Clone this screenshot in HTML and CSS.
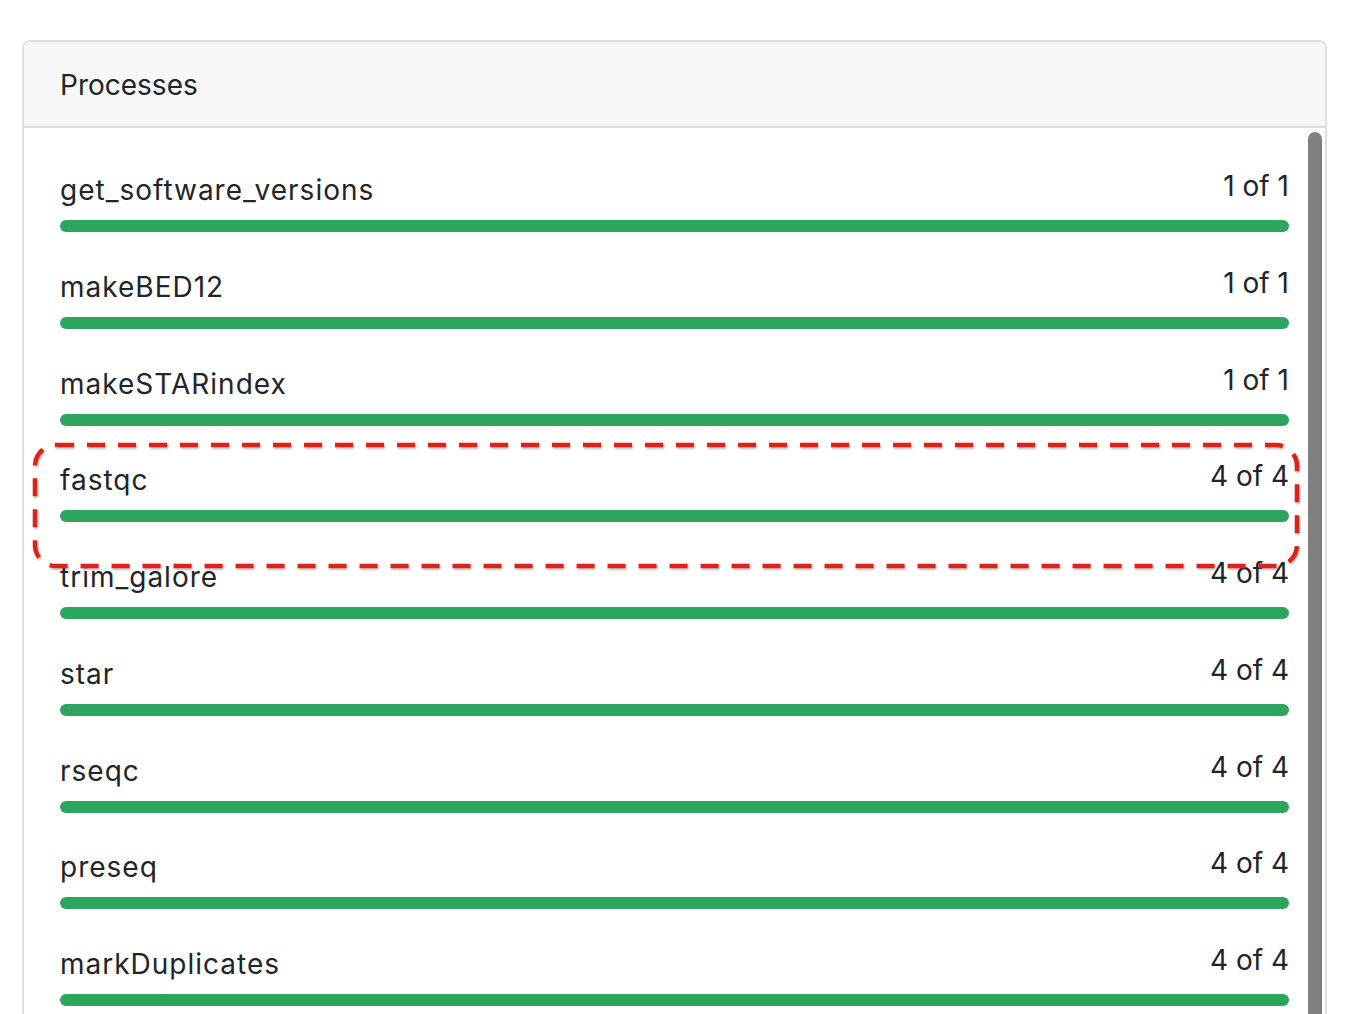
FILE: index.html
```html
<!DOCTYPE html>
<html>
<head>
<meta charset="utf-8">
<link rel="stylesheet" href="styles.css">
</head>
<body>
<div class="card">
  <div class="card-header">Processes</div>
  <div class="card-body">
    <div class="list">
      <div class="row"><div class="labels"><span class="name">get_software_versions</span><span class="count">1 of 1</span></div><div class="bar"></div></div>
      <div class="row"><div class="labels"><span class="name">makeBED12</span><span class="count">1 of 1</span></div><div class="bar"></div></div>
      <div class="row"><div class="labels"><span class="name">makeSTARindex</span><span class="count">1 of 1</span></div><div class="bar"></div></div>
      <div class="row"><div class="labels"><span class="name">fastqc</span><span class="count">4 of 4</span></div><div class="bar"></div></div>
      <div class="row"><div class="labels"><span class="name">trim_galore</span><span class="count">4 of 4</span></div><div class="bar"></div></div>
      <div class="row"><div class="labels"><span class="name">star</span><span class="count">4 of 4</span></div><div class="bar"></div></div>
      <div class="row"><div class="labels"><span class="name">rseqc</span><span class="count">4 of 4</span></div><div class="bar"></div></div>
      <div class="row"><div class="labels"><span class="name">preseq</span><span class="count">4 of 4</span></div><div class="bar"></div></div>
      <div class="row"><div class="labels"><span class="name">markDuplicates</span><span class="count">4 of 4</span></div><div class="bar"></div></div>
    </div>
    <div class="scrollbar"></div>
  </div>
</div>
<svg class="highlight" width="1270" height="130" viewBox="0 0 1270 130">
  <defs>
    <filter id="sh" x="-5%" y="-20%" width="110%" height="140%">
      <feDropShadow dx="1" dy="1.5" stdDeviation="1" flood-color="#000" flood-opacity="0.3"/>
    </filter>
  </defs>
  <rect x="4" y="4" width="1262" height="121" rx="21" ry="21" fill="none" stroke="#dd2219" stroke-width="4.5" stroke-dasharray="18 13" filter="url(#sh)"/>
</svg>
</body>
</html>
```

FILE: styles.css
```css
html, body {
  margin: 0;
  padding: 0;
  background: #fff;
}
body {
  font-family: "Inter", "Liberation Sans", sans-serif;
  color: #212529;
  padding: 40px 0 0 22px;
  width: 1305px;
  height: 974px;
  overflow: hidden;
  position: relative;
}
.card {
  border: 2px solid #dfdfdf;
  border-radius: 8px;
  background: #fff;
  overflow: hidden;
}
.card-header {
  background: #f7f7f7;
  border-bottom: 2px solid #dfdfdf;
  padding: 25px 36px 23px;
  font-size: 28px;
  line-height: 36px;
}
.card-body {
  display: flex;
  align-items: flex-start;
}
.list {
  flex: 1;
  padding: 41px 19px 0 36px;
}
.row {
  margin-bottom: 33.75px;
}
.labels {
  display: flex;
  justify-content: space-between;
  height: 42px;
  margin-bottom: 9px;
}
.name {
  font-size: 28px;
  line-height: 42px;
  letter-spacing: 1px;
}
.count {
  font-size: 28px;
  line-height: 42px;
  margin-top: -4px;
}
.bar {
  height: 12px;
  border-radius: 6px;
  background: #2da55e;
}
.scrollbar {
  width: 14px;
  height: 1200px;
  margin: 4px 3px 0 0;
  border-radius: 7px;
  background: #808080;
  flex: none;
}
.highlight {
  position: absolute;
  left: 31px;
  top: 441px;
}
```
